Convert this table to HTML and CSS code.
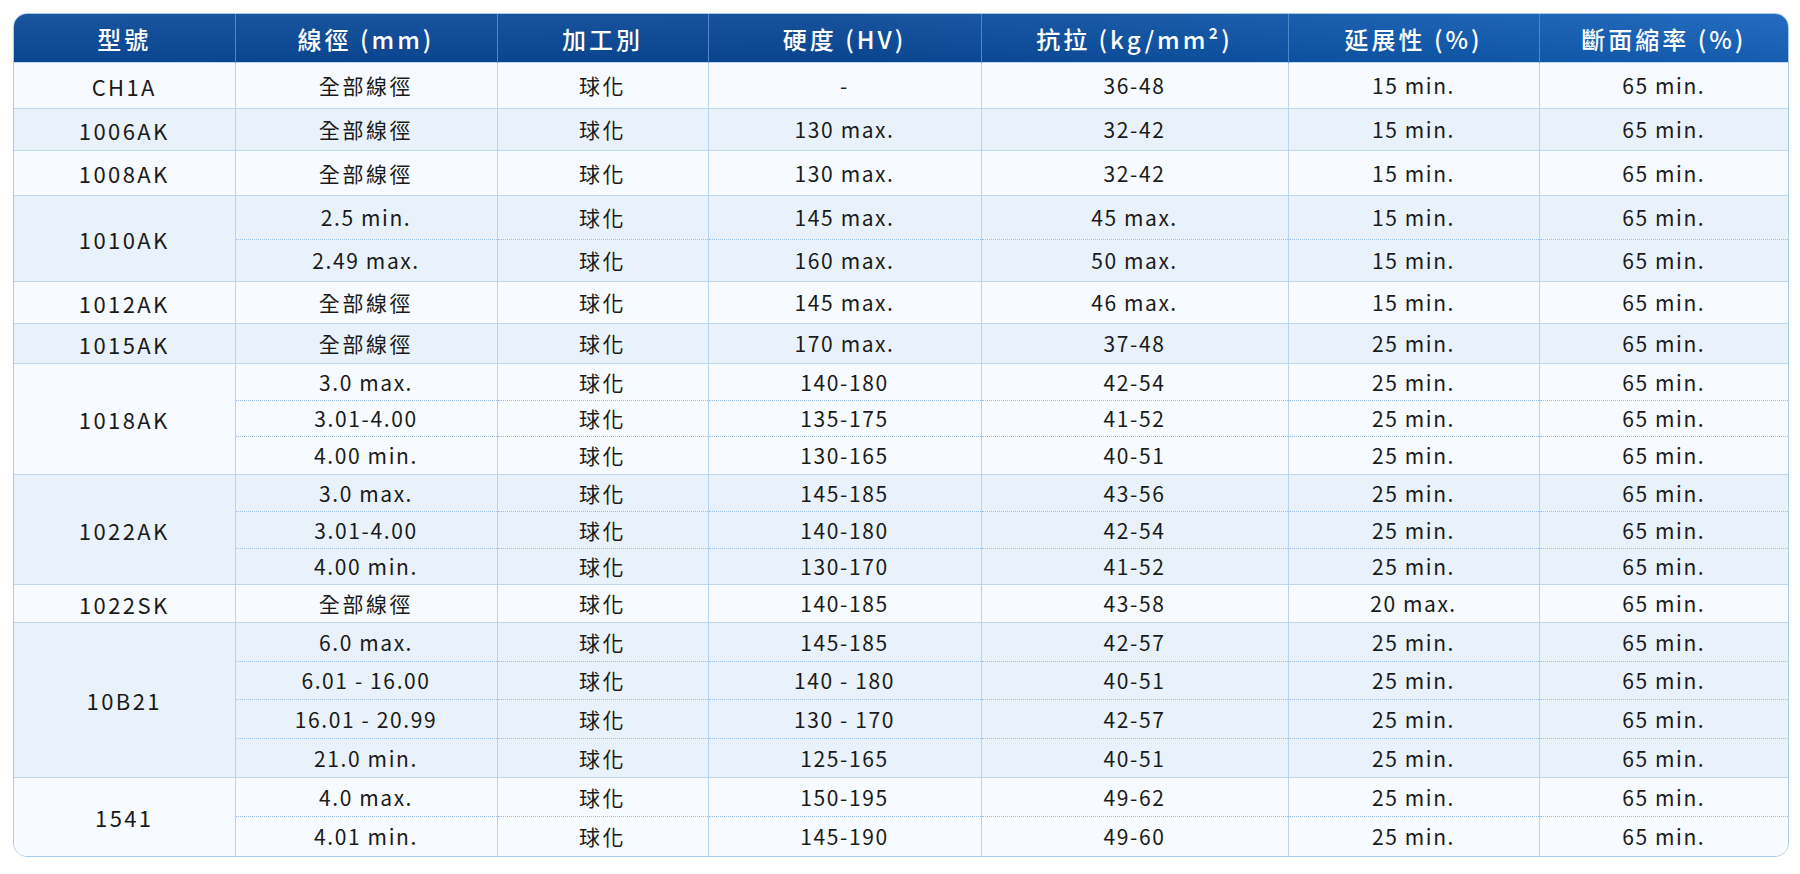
FILE: index.html
```html
<!DOCTYPE html>
<html lang="zh-Hant">
<head>
<meta charset="utf-8">
<title>規格表</title>
<link rel="stylesheet" href="styles.css">
</head>
<body>
<div class="wrap">
<table class="spec">
<colgroup>
<col class="c1"><col class="c2"><col class="c3"><col class="c4"><col class="c5"><col class="c6"><col class="c7">
</colgroup>
<thead>
<tr>
<th>型號</th><th>線徑 (mm)</th><th>加工別</th><th>硬度 (HV)</th><th>抗拉 (kg/mm²)</th><th>延展性 (%)</th><th>斷面縮率 (%)</th>
</tr>
</thead>
<tbody>
<tr class="g a h46"><td>CH1A</td><td class="cj">全部線徑</td><td class="cj">球化</td><td>-</td><td>36-48</td><td>15 min.</td><td>65 min.</td></tr>
<tr class="g b h42"><td>1006AK</td><td class="cj">全部線徑</td><td class="cj">球化</td><td>130 max.</td><td>32-42</td><td>15 min.</td><td>65 min.</td></tr>
<tr class="g a h45"><td>1008AK</td><td class="cj">全部線徑</td><td class="cj">球化</td><td>130 max.</td><td>32-42</td><td>15 min.</td><td>65 min.</td></tr>

<tr class="g b h44"><td rowspan="2">1010AK</td><td>2.5 min.</td><td class="cj">球化</td><td>145 max.</td><td>45 max.</td><td>15 min.</td><td>65 min.</td></tr>
<tr class="s b h42"><td>2.49 max.</td><td class="cj">球化</td><td>160 max.</td><td>50 max.</td><td>15 min.</td><td>65 min.</td></tr>

<tr class="g a h42"><td>1012AK</td><td class="cj">全部線徑</td><td class="cj">球化</td><td>145 max.</td><td>46 max.</td><td>15 min.</td><td>65 min.</td></tr>
<tr class="g b h40"><td>1015AK</td><td class="cj">全部線徑</td><td class="cj">球化</td><td>170 max.</td><td>37-48</td><td>25 min.</td><td>65 min.</td></tr>

<tr class="g a h37"><td rowspan="3">1018AK</td><td>3.0 max.</td><td class="cj">球化</td><td>140-180</td><td>42-54</td><td>25 min.</td><td>65 min.</td></tr>
<tr class="s a h36"><td>3.01-4.00</td><td class="cj">球化</td><td>135-175</td><td>41-52</td><td>25 min.</td><td>65 min.</td></tr>
<tr class="s a h38"><td>4.00 min.</td><td class="cj">球化</td><td>130-165</td><td>40-51</td><td>25 min.</td><td>65 min.</td></tr>

<tr class="g b h37"><td rowspan="3">1022AK</td><td>3.0 max.</td><td class="cj">球化</td><td>145-185</td><td>43-56</td><td>25 min.</td><td>65 min.</td></tr>
<tr class="s b h37"><td>3.01-4.00</td><td class="cj">球化</td><td>140-180</td><td>42-54</td><td>25 min.</td><td>65 min.</td></tr>
<tr class="s b h36"><td>4.00 min.</td><td class="cj">球化</td><td>130-170</td><td>41-52</td><td>25 min.</td><td>65 min.</td></tr>

<tr class="g a h38"><td>1022SK</td><td class="cj">全部線徑</td><td class="cj">球化</td><td>140-185</td><td>43-58</td><td>20 max.</td><td>65 min.</td></tr>

<tr class="g b h39"><td rowspan="4">10B21</td><td>6.0 max.</td><td class="cj">球化</td><td>145-185</td><td>42-57</td><td>25 min.</td><td>65 min.</td></tr>
<tr class="s b h38"><td>6.01 - 16.00</td><td class="cj">球化</td><td>140 - 180</td><td>40-51</td><td>25 min.</td><td>65 min.</td></tr>
<tr class="s b h39"><td>16.01 - 20.99</td><td class="cj">球化</td><td>130 - 170</td><td>42-57</td><td>25 min.</td><td>65 min.</td></tr>
<tr class="s b h39"><td>21.0 min.</td><td class="cj">球化</td><td>125-165</td><td>40-51</td><td>25 min.</td><td>65 min.</td></tr>

<tr class="g a h39"><td rowspan="2">1541</td><td>4.0 max.</td><td class="cj">球化</td><td>150-195</td><td>49-62</td><td>25 min.</td><td>65 min.</td></tr>
<tr class="s a h40"><td>4.01 min.</td><td class="cj">球化</td><td>145-190</td><td>49-60</td><td>25 min.</td><td>65 min.</td></tr>
</tbody>
</table>
</div>
</body>
</html>
```
FILE: styles.css
```css
html, body {
  margin: 0;
  padding: 0;
  background: #ffffff;
}
body {
  font-family: "Noto Sans CJK TC", "Noto Sans", sans-serif;
  color: #1a1a1a;
}
.wrap {
  margin: 13px 0 0 13px;
  width: 1774px;
  border: 1px solid #a8cbea;
  border-radius: 14px;
  overflow: hidden;
  background: #f6f9fd;
}
.spec {
  width: 100%;
  border-collapse: collapse;
  table-layout: fixed;
}
.c1 { width: 221px; }
.c2 { width: 262px; }
.c3 { width: 211px; }
.c4 { width: 273px; }
.c5 { width: 307px; }
.c6 { width: 251px; }
.c7 { width: 249px; }

.spec thead th {
  height: 48px;
  padding: 0;
  color: #ffffff;
  font-size: 24px;
  font-weight: 500;
  letter-spacing: 3px;
  text-align: center;
  vertical-align: middle;
  border-left: 1px solid #4f86cc;
}
.spec thead th:first-child { border-left: none; }
.spec thead tr {
  background:
    linear-gradient(180deg, rgba(255,255,255,0.06) 0%, rgba(0,0,0,0.06) 100%),
    linear-gradient(90deg, #0b4a99 0%, #0a4796 45%, #0e56aa 75%, #1663bb 100%);
}

.spec td {
  padding: 0;
  text-align: center;
  vertical-align: middle;
  font-size: 21px;
  font-weight: 400;
  letter-spacing: 1.6px;
  border-left: 1px solid #b7d4ef;
  line-height: 1;
}
.spec td.cj { letter-spacing: 2.6px; }
.spec td:first-child,
.spec td[rowspan] {
  border-left: none;
  font-size: 22px;
  letter-spacing: 2.4px;
}
.spec tr.a td { background: #f7fafe; }
.spec tr.b td { background: #e9f2fb; }
.spec tr.g td { border-top: 1px solid #bdd7ef; }
.spec tr.s td { border-top: 1px dotted #99c0e4; }
.spec tr.s td:first-child {
  border-left: 1px solid #b7d4ef;
  font-size: 21px;
  letter-spacing: 1.6px;
}

.h36 td { height: 35px; }
.h37 td { height: 36px; }
.h38 td { height: 37px; }
.h39 td { height: 38px; }
.h40 td { height: 39px; }
.h42 td { height: 41px; }
.h44 td { height: 43px; }
.h45 td { height: 44px; }
.h46 td { height: 45px; }
```
